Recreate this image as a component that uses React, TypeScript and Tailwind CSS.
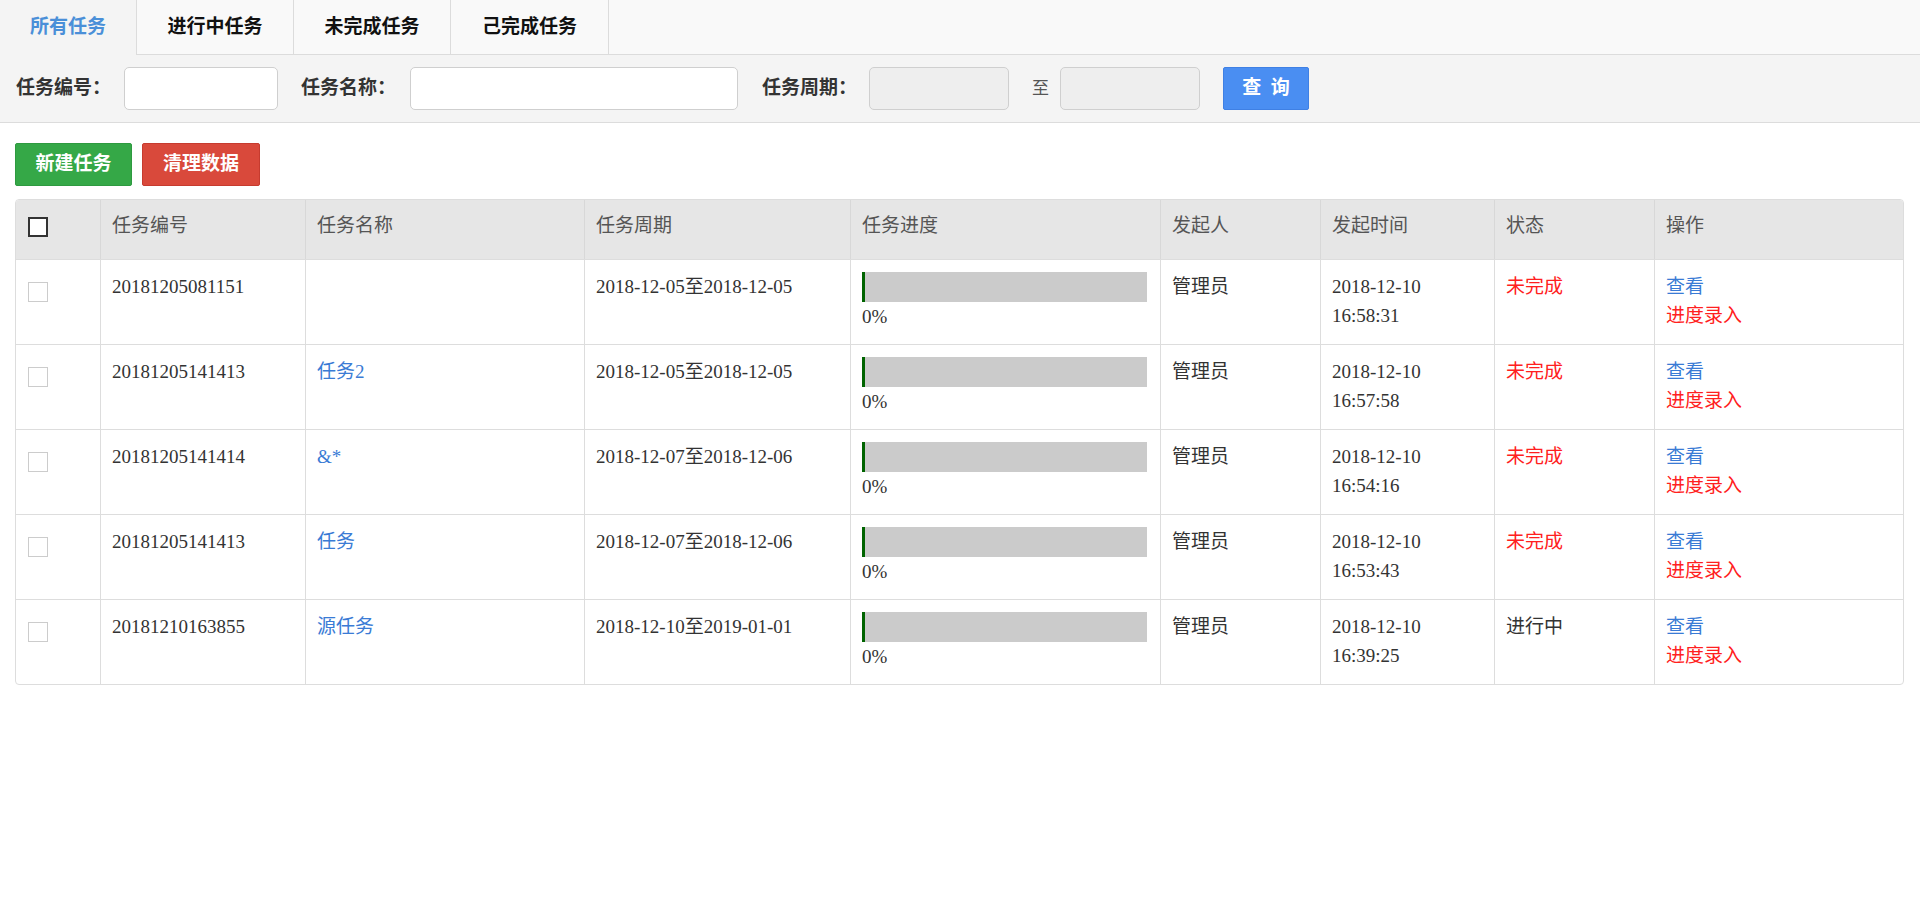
import React from "react";

const rows = [
  { id: "20181205081151", name: "", period: "2018-12-05至2018-12-05", date: "2018-12-10", time: "16:58:31", status: "未完成" },
  { id: "20181205141413", name: "任务2", period: "2018-12-05至2018-12-05", date: "2018-12-10", time: "16:57:58", status: "未完成" },
  { id: "20181205141414", name: "&*", period: "2018-12-07至2018-12-06", date: "2018-12-10", time: "16:54:16", status: "未完成" },
  { id: "20181205141413", name: "任务", period: "2018-12-07至2018-12-06", date: "2018-12-10", time: "16:53:43", status: "未完成" },
  { id: "20181210163855", name: "源任务", period: "2018-12-10至2019-01-01", date: "2018-12-10", time: "16:39:25", status: "进行中" },
];

const gridCols =
  "grid grid-cols-[84px_205px_279px_266px_310px_160px_174px_160px_249px]";

export default function App() {
  const headers = ["任务编号", "任务名称", "任务周期", "任务进度", "发起人", "发起时间", "状态", "操作"];
  return (
    <div className="min-h-[913px] w-[1920px] bg-white font-['Liberation_Serif','Noto_Sans_CJK_SC',serif] text-[#333]">
      {/* Tabs */}
      <div className="flex h-[55px] border-b border-[#dcdcdc] bg-[#f9f9f9]">
        <div className="-mb-px flex h-[55px] w-[137px] items-center justify-center border-r border-[#dcdcdc] bg-[#f4f4f4] text-[19px] font-bold text-[#4a8fd8]">
          所有任务
        </div>
        <div className="flex h-[54px] w-[157px] items-center justify-center border-r border-[#dcdcdc] text-[19px] font-bold text-[#111]">
          进行中任务
        </div>
        <div className="flex h-[54px] w-[157px] items-center justify-center border-r border-[#dcdcdc] text-[19px] font-bold text-[#111]">
          未完成任务
        </div>
        <div className="flex h-[54px] w-[158px] items-center justify-center border-r border-[#dcdcdc] text-[19px] font-bold text-[#111]">
          己完成任务
        </div>
      </div>

      {/* Filter bar */}
      <div className="flex h-[68px] items-center border-b border-[#dcdcdc] bg-[#f4f4f4] pl-4 text-[19px]">
        <span className="w-[108px] font-bold text-[#333]">任务编号：</span>
        <div className="h-[43px] w-[154px] rounded-[5px] border border-[#cfcfcf] bg-white" />
        <span className="ml-[23px] w-[109px] font-bold text-[#333]">任务名称：</span>
        <div className="h-[43px] w-[328px] rounded-[5px] border border-[#cfcfcf] bg-white" />
        <span className="ml-[24px] w-[107px] font-bold text-[#333]">任务周期：</span>
        <div className="h-[43px] w-[140px] rounded-[5px] border border-[#cfcfcf] bg-[#eeeeee]" />
        <span className="ml-[23px] w-[28px] text-[17px] text-[#555]">至</span>
        <div className="h-[43px] w-[140px] rounded-[5px] border border-[#cfcfcf] bg-[#eeeeee]" />
        <button className="ml-[23px] flex h-[43px] w-[86px] items-center justify-center rounded-[2px] border border-[#3f80e4] bg-[#4a8ef2] text-[19px] font-bold text-white">
          查&nbsp;&nbsp;询
        </button>
      </div>

      {/* Action buttons */}
      <div className="flex gap-[10px] px-[15px] pt-[20px]">
        <button className="flex h-[43px] w-[117px] items-center justify-center rounded-[2px] border border-[#2e9a40] bg-[#35a847] text-[19px] font-bold text-white">
          新建任务
        </button>
        <button className="flex h-[43px] w-[118px] items-center justify-center rounded-[2px] border border-[#c63b2f] bg-[#d9493b] text-[19px] font-bold text-white">
          清理数据
        </button>
      </div>

      {/* Table */}
      <div className="mx-[15px] mt-[13px] w-[1889px] overflow-hidden rounded-[4px] border border-[#dddddd] text-[19px] leading-[29px]">
        <div className={`${gridCols} h-[59px] bg-[#e6e6e6] text-[#555]`}>
          <div className="pl-[12px] pt-[17px]">
            <div className="h-[20px] w-[20px] border-2 border-[#333] bg-white" />
          </div>
          {headers.map((h) => (
            <div key={h} className="border-l border-[#d8d8d8] pl-[11px] pt-[11px]">
              {h}
            </div>
          ))}
        </div>
        {rows.map((r, i) => (
          <div key={i} className={`${gridCols} h-[85px] border-t border-[#dddddd]`}>
            <div className="pl-[12px] pt-[22px]">
              <div className="h-[20px] w-[20px] border border-[#cccccc] bg-white" />
            </div>
            <div className="border-l border-[#dddddd] pl-[11px] pt-[12px]">{r.id}</div>
            <div className="border-l border-[#dddddd] pl-[11px] pt-[12px] text-[#3a7bd5]">{r.name}</div>
            <div className="border-l border-[#dddddd] pl-[11px] pt-[12px]">{r.period}</div>
            <div className="border-l border-[#dddddd] pl-[11px] pt-[12px]">
              <div className="h-[30px] w-[285px] border-l-[3px] border-[#006400] bg-[#cbcbcb]" />
              <div className="leading-[29px]">0%</div>
            </div>
            <div className="border-l border-[#dddddd] pl-[11px] pt-[12px]">管理员</div>
            <div className="border-l border-[#dddddd] pl-[11px] pt-[12px]">
              <div>{r.date}</div>
              <div>{r.time}</div>
            </div>
            <div
              className={`border-l border-[#dddddd] pl-[11px] pt-[12px] ${
                r.status === "未完成" ? "text-[#ff2020]" : "text-[#333]"
              }`}
            >
              {r.status}
            </div>
            <div className="border-l border-[#dddddd] pl-[11px] pt-[12px]">
              <div className="text-[#3a7bd5]">查看</div>
              <div className="text-[#ff2020]">进度录入</div>
            </div>
          </div>
        ))}
      </div>
    </div>
  );
}
